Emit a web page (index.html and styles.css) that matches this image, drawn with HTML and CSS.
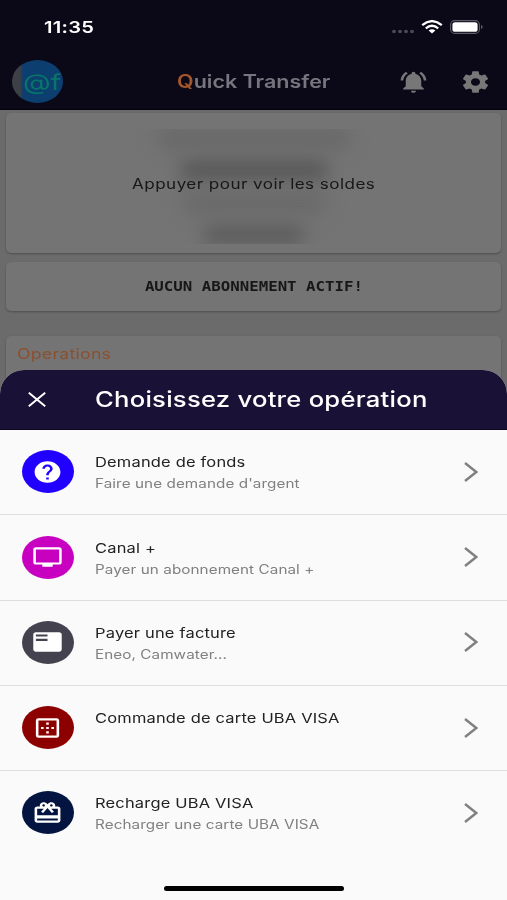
FILE: index.html
```html
<!DOCTYPE html>
<html lang="fr">
<head>
<meta charset="utf-8">
<title>Quick Transfer</title>
<link rel="stylesheet" href="styles.css">
</head>
<body>
<div class="screen">
  <header class="top">
    <div class="status">
      <span class="time wide">11:35</span>
      <div class="signals">
        <svg width="24" height="5" viewBox="0 0 24 5"><g fill="#4b4956"><ellipse cx="3" cy="2.5" rx="2" ry="1.7"/><ellipse cx="9" cy="2.5" rx="2" ry="1.7"/><ellipse cx="15" cy="2.5" rx="2" ry="1.7"/><ellipse cx="21" cy="2.5" rx="2" ry="1.7"/></g></svg>
        <svg class="wifi" width="22" height="14" viewBox="0 0 22 14"><g fill="none" stroke="#fff" stroke-width="2.3"><path d="M1.2 5.1Q11-2.8 20.8 5.1"/><path d="M4.8 8.3Q11 3.3 17.2 8.3"/></g><path d="M7.6 10.6Q11 8 14.4 10.6L11 13.6z" fill="#fff"/></svg>
        <svg width="33" height="14" viewBox="0 0 33 14"><rect x=".6" y=".6" width="28.8" height="12.8" rx="4" fill="none" stroke="#5d5b68" stroke-width="1.1"/><rect x="2.4" y="2.2" width="25.2" height="9.6" rx="2.6" fill="#fff"/><path d="M31 5q1.7.5 1.7 2T31 9z" fill="#5d5b68"/></svg>
      </div>
    </div>
    <div class="appbar">
      <div class="avatar"><span class="wide">@f</span></div>
      <h1 class="brand wide"><b>Q</b>uick Transfer</h1>
      <svg class="icon bell" viewBox="0 0 24 24" preserveAspectRatio="none"><path d="M7.58 4.08L6.15 2.65C3.75 4.48 2.17 7.3 2.03 10.5h2c.15-2.65 1.51-4.97 3.55-6.42zm12.39 6.42h2c-.15-3.2-1.73-6.02-4.12-7.85l-1.42 1.43c2.02 1.45 3.39 3.77 3.54 6.42zM18 11c0-3.07-1.64-5.64-4.5-6.32V4c0-.83-.67-1.5-1.5-1.5s-1.5.67-1.5 1.5v.68C7.63 5.36 6 7.92 6 11v5l-2 2v1h16v-1l-2-2v-5zm-6 11c.14 0 .27-.01.4-.04.65-.14 1.18-.58 1.44-1.18.1-.24.15-.5.15-.78h-4c.01 1.1.9 2 2.01 2z"/></svg>
      <svg class="icon" viewBox="0 0 24 24" preserveAspectRatio="none"><path d="M19.43 12.98c.04-.32.07-.64.07-.98s-.03-.66-.07-.98l2.11-1.65c.19-.15.24-.42.12-.64l-2-3.46c-.12-.22-.39-.3-.61-.22l-2.49 1c-.52-.4-1.08-.73-1.69-.98l-.38-2.65C14.46 2.18 14.25 2 14 2h-4c-.25 0-.46.18-.49.42l-.38 2.65c-.61.25-1.17.59-1.69.98l-2.49-1c-.23-.09-.49 0-.61.22l-2 3.46c-.13.22-.07.49.12.64l2.11 1.65c-.04.32-.07.65-.07.98s.03.66.07.98l-2.11 1.65c-.19.15-.24.42-.12.64l2 3.46c.12.22.39.3.61.22l2.49-1c.52.4 1.08.73 1.69.98l.38 2.65c.03.24.24.42.49.42h4c.25 0 .46-.18.49-.42l.38-2.65c.61-.25 1.17-.59 1.69-.98l2.49 1c.23.09.49 0 .61-.22l2-3.46c.12-.22.07-.49-.12-.64l-2.11-1.65zM12 15.5c-1.93 0-3.5-1.57-3.5-3.5s1.57-3.5 3.5-3.5 3.5 1.57 3.5 3.5-1.57 3.5-3.5 3.5z"/></svg>
    </div>
  </header>

  <main class="content">
    <section class="card balance">
      <div class="veil"><i></i><i></i><i></i><i></i></div>
      <span class="wide reveal">Appuyer pour voir les soldes</span>
    </section>
    <section class="card subscription"><span class="wide">AUCUN ABONNEMENT ACTIF!</span></section>
    <section class="card operations"><span class="wide">Operations</span></section>
  </main>

  <div class="sheet">
    <div class="sheet-head">
      <svg width="18" height="15" viewBox="0 0 18 15"><path d="M.8.7l16.4 13.6M17.2.7L.8 14.3" stroke="#fff" stroke-width="1.9"/></svg>
      <h2 class="wide">Choisissez votre opération</h2>
    </div>
    <ul class="list">
      <li>
        <span class="disc blue"><svg class="icon" viewBox="0 0 24 24" preserveAspectRatio="none"><path d="M12 2C6.48 2 2 6.48 2 12s4.48 10 10 10 10-4.48 10-10S17.52 2 12 2zm1 17h-2v-2h2v2zm2.07-7.75l-.9.92C13.45 12.9 13 13.5 13 15h-2v-.5c0-1.1.45-2.1 1.17-2.83l1.24-1.26c.37-.36.59-.86.59-1.41 0-1.1-.9-2-2-2s-2 .9-2 2H8c0-2.21 1.79-4 4-4s4 1.79 4 4c0 .88-.36 1.68-.93 2.25z"/></svg></span>
        <div class="text"><span class="wide name">Demande de fonds</span><span class="wide note">Faire une demande d'argent</span></div>
        <svg class="chevron" viewBox="0 0 14 20"><path d="M1 1l11.3 9L1 19"/></svg>
      </li>
      <li>
        <span class="disc magenta"><svg class="icon" viewBox="0 0 24 24" preserveAspectRatio="none"><path d="M21 3H3c-1.11 0-2 .89-2 2v12c0 1.1.89 2 2 2h5v2h8v-2h5c1.1 0 1.99-.9 1.99-2L23 5c0-1.11-.9-2-2-2zm0 14H3V5h18v12z"/></svg></span>
        <div class="text"><span class="wide name">Canal +</span><span class="wide note">Payer un abonnement Canal +</span></div>
        <svg class="chevron" viewBox="0 0 14 20"><path d="M1 1l11.3 9L1 19"/></svg>
      </li>
      <li>
        <span class="disc slate"><svg class="icon" viewBox="0 0 24 24" preserveAspectRatio="none"><path d="M21 3H3c-1.1 0-2 .9-2 2v14c0 1.1.9 2 2 2h18c1.1 0 2-.9 2-2V5c0-1.1-.9-2-2-2zm-9 8H3V9h9v2zm0-4H3V5h9v2z"/></svg></span>
        <div class="text"><span class="wide name">Payer une facture</span><span class="wide note">Eneo, Camwater...</span></div>
        <svg class="chevron" viewBox="0 0 14 20"><path d="M1 1l11.3 9L1 19"/></svg>
      </li>
      <li>
        <span class="disc red"><svg class="icon" viewBox="0 0 24 24" preserveAspectRatio="none"><rect x="4" y="4" width="16" height="16" rx="1" fill="none" stroke="#fff" stroke-width="2"/><path d="M11 7h2v2h-2zM11 11h2v2h-2zM11 15h2v2h-2zM7 11h2v2H7zM15 11h2v2h-2z"/></svg></span>
        <div class="text"><span class="wide name">Commande de carte UBA VISA</span><span class="wide note">&nbsp;</span></div>
        <svg class="chevron" viewBox="0 0 14 20"><path d="M1 1l11.3 9L1 19"/></svg>
      </li>
      <li>
        <span class="disc navy"><svg class="icon" viewBox="0 0 24 24" preserveAspectRatio="none"><path d="M20 6h-2.18c.11-.31.18-.65.18-1 0-1.66-1.34-3-3-3-1.05 0-1.96.54-2.5 1.35l-.5.67-.5-.68C10.96 2.54 10.05 2 9 2 7.34 2 6 3.34 6 5c0 .35.07.69.18 1H4c-1.11 0-1.99.89-1.99 2L2 19c0 1.11.89 2 2 2h16c1.11 0 2-.89 2-2V8c0-1.11-.89-2-2-2zm-5-2c.55 0 1 .45 1 1s-.45 1-1 1-1-.45-1-1 .45-1 1-1zM9 4c.55 0 1 .45 1 1s-.45 1-1 1-1-.45-1-1 .45-1 1-1zm11 15H4v-2h16v2zm0-5H4V8h5.08L7 10.83 8.62 12 11 8.76l1-1.36 1 1.36L15.38 12 17 10.83 14.92 8H20v6z"/></svg></span>
        <div class="text"><span class="wide name">Recharge UBA VISA</span><span class="wide note">Recharger une carte UBA VISA</span></div>
        <svg class="chevron" viewBox="0 0 14 20"><path d="M1 1l11.3 9L1 19"/></svg>
      </li>
    </ul>
    <div class="home"></div>
  </div>
</div>
</body>
</html>
```
FILE: styles.css
```css
* { box-sizing: border-box; margin: 0; padding: 0; }
body { font-family: Inter, "Liberation Sans", sans-serif; background: #6b6b6b; }
svg { display: block; flex: none; }
.screen { position: relative; width: 507px; height: 900px; overflow: hidden; background: #6b6b6b; }

/* Glyphs are drawn wider than the font's own proportions */
.wide { display: inline-block; white-space: nowrap; transform: scaleX(var(--w, 1.22)); transform-origin: left center; }

.top { height: 110px; background: #0b0818; border-bottom: 1px solid #03020a; }
.status { height: 54px; padding: 0 24px 0 44px; display: flex; justify-content: space-between; align-items: center; }
.time { color: #fff; font-size: 16.5px; font-weight: 600; letter-spacing: .2px; }
.signals { display: flex; align-items: center; }
.signals svg:first-child { margin: 9px 6px 0 0; }
.wifi { margin-right: 7px; }
.appbar { height: 55px; display: flex; align-items: center; padding: 0 16px 0 12px; }
.avatar { width: 51px; height: 43px; border-radius: 50%; overflow: hidden; display: flex; align-items: center; padding-left: 11px; background: linear-gradient(90deg, #3d4045 0 8px, #0c3e70 11px); color: #087568; font-size: 22px; --w: 1.3; }
.brand { width: 153px; margin-left: 114px; color: #77757d; font-size: 18px; font-weight: 600; --w: 1.195; }
.brand b { color: #a3562b; font-weight: 600; }
.icon { width: 31px; height: 26px; fill: #777; }
.bell { margin: 0 31px 0 auto; }

.content { padding: 3px 6px 0; }
.card { background: #747474; border-radius: 5px; box-shadow: 0 1px 2px #4f4f4f; }
.balance { position: relative; height: 140px; display: flex; justify-content: center; align-items: center; overflow: hidden; }
.reveal, .subscription .wide { transform-origin: center; }
.reveal { position: relative; color: #171717; font-size: 14px; letter-spacing: .36px; }
.veil { position: absolute; inset: 16px 14px 9px; display: flex; flex-direction: column; align-items: center; justify-content: space-between; overflow: hidden; }
.veil i { width: 190px; height: 18px; background: #676767; filter: blur(9px); }
.veil i:nth-child(2) { width: 146px; background: #555; }
.veil i:nth-child(3) { width: 140px; background: #686868; }
.veil i:nth-child(4) { width: 98px; background: #5a5a5a; }
.subscription { height: 49px; margin-top: 9px; padding-bottom: 2px; display: flex; justify-content: center; align-items: center; color: #171717; font: bold 14px "DejaVu Sans Mono", monospace; }
.subscription .wide { --w: 1.125; }
.operations { height: 80px; margin-top: 25px; padding: 9px 11px; color: #8b5030; font-size: 14.5px; letter-spacing: .2px; }

.sheet { position: absolute; left: 0; right: 0; top: 370px; bottom: 0; background: #fafafa; border-radius: 24px 24px 0 0; overflow: hidden; }
.sheet-head { height: 60px; background: #1a1236; display: flex; align-items: center; padding-left: 28px; border-bottom: 1px solid #0d0923; }
.sheet-head h2 { margin-left: 49px; color: #fff; font-size: 21px; font-weight: 500; letter-spacing: .2px; }
.list { list-style: none; display: grid; grid-template-rows: repeat(5, 85.25px); }
.list li { display: flex; align-items: center; padding: 0 29px .5px 21.5px; border-bottom: 1px solid #dedede; }
.list li:last-child { border-color: transparent; }
.disc { width: 52px; height: 43px; border-radius: 50%; display: flex; align-items: center; justify-content: center; }
.disc .icon { fill: #fff; }
.blue { background: #2200ff; }
.magenta { background: #c800c0; }
.slate { background: #45424f; }
.red { background: #8c0000; }
.navy { background: #02143f; }
.text { flex: 1; padding: 4px 0 0 21px; display: flex; flex-direction: column; align-items: flex-start; }
.name { color: #222; font-size: 13.5px; font-weight: 400; letter-spacing: .15px; line-height: 21px; }
.note { color: #808080; font-size: 12.5px; letter-spacing: .06px; line-height: 22px; }
.chevron { width: 14px; height: 20px; fill: none; stroke: #808080; stroke-width: 2.4; }
.home { width: 180px; height: 5px; border-radius: 3px; background: #000; margin: 30px auto 0; }
```
